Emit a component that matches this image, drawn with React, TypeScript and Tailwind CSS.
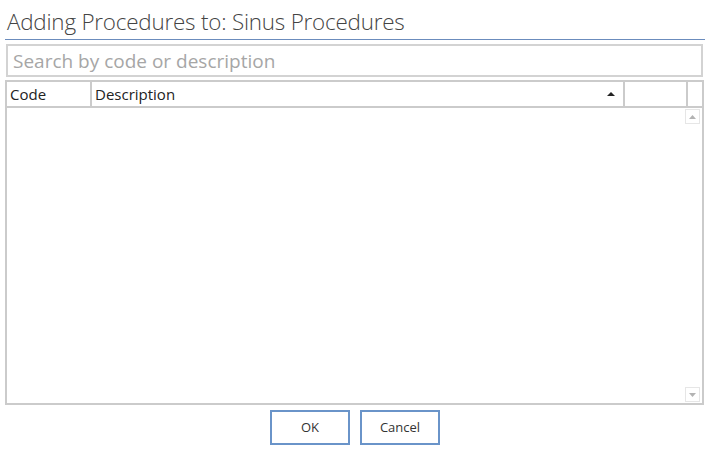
import React from 'react';

export default function App() {
  return (
    <div className="w-[710px] h-[454px] bg-white text-[#444] font-['Open_Sans',sans-serif] overflow-hidden">
      <div className="px-[5px] pt-[7px]">
        <h1 className="pl-[2px] text-[22.4px] font-light leading-[29px] tracking-[-0.2px] text-[#444] border-b border-[#6b8cbd] pb-[3px]">
          Adding Procedures to: Sinus Procedures
        </h1>

        <div className="mt-[4px] ml-[1px] mr-[2px]">
          <input
            type="text"
            placeholder="Search by code or description"
            className="w-full h-[33px] border-2 border-[#d3d3d3] px-[5px] text-[19px] placeholder:text-[#a6a6a6] outline-none"
          />
        </div>

        <div className="mt-[3px] mr-[1px] border-2 border-[#cbcbcb] h-[325px] flex flex-col">
          <div className="flex h-[26px] border-b-2 border-[#cbcbcb] text-[15px] text-[#222]">
            <div className="w-[85px] border-r-2 border-[#cbcbcb] pl-[3px] leading-[24px]">Code</div>
            <div className="flex-1 border-r-2 border-[#cbcbcb] pl-[3px] leading-[24px] flex items-center justify-between pr-[8px]">
              <span>Description</span>
              <svg width="8" height="5" viewBox="0 0 8 5" className="mb-[2px]">
                <path d="M0 5 L4 1 L8 5 Z" fill="#222" />
              </svg>
            </div>
            <div className="w-[63px] border-r-2 border-[#cbcbcb]" />
            <div className="w-[14px]" />
          </div>
          <div className="flex-1 flex justify-end">
            <div className="w-[17px] flex flex-col justify-between py-[1px] pr-[1px]">
              <div className="h-[15px] w-[15px] border border-[#e6e6e6] flex items-center justify-center">
                <svg width="7" height="4" viewBox="0 0 7 4">
                  <path d="M0 4 L3.5 0 L7 4 Z" fill="#b3b3b3" />
                </svg>
              </div>
              <div className="h-[15px] w-[15px] border border-[#e6e6e6] flex items-center justify-center">
                <svg width="7" height="4" viewBox="0 0 7 4">
                  <path d="M0 0 L3.5 4 L7 0 Z" fill="#b3b3b3" />
                </svg>
              </div>
            </div>
          </div>
        </div>

        <div className="flex justify-center gap-[10px] mt-[5px]">
          <button className="w-[80px] h-[35px] border-2 border-[#6a94c9] text-[13px] text-[#333] bg-white">OK</button>
          <button className="w-[80px] h-[35px] border-2 border-[#6a94c9] text-[13px] text-[#333] bg-white">Cancel</button>
        </div>
      </div>
    </div>
  );
}
